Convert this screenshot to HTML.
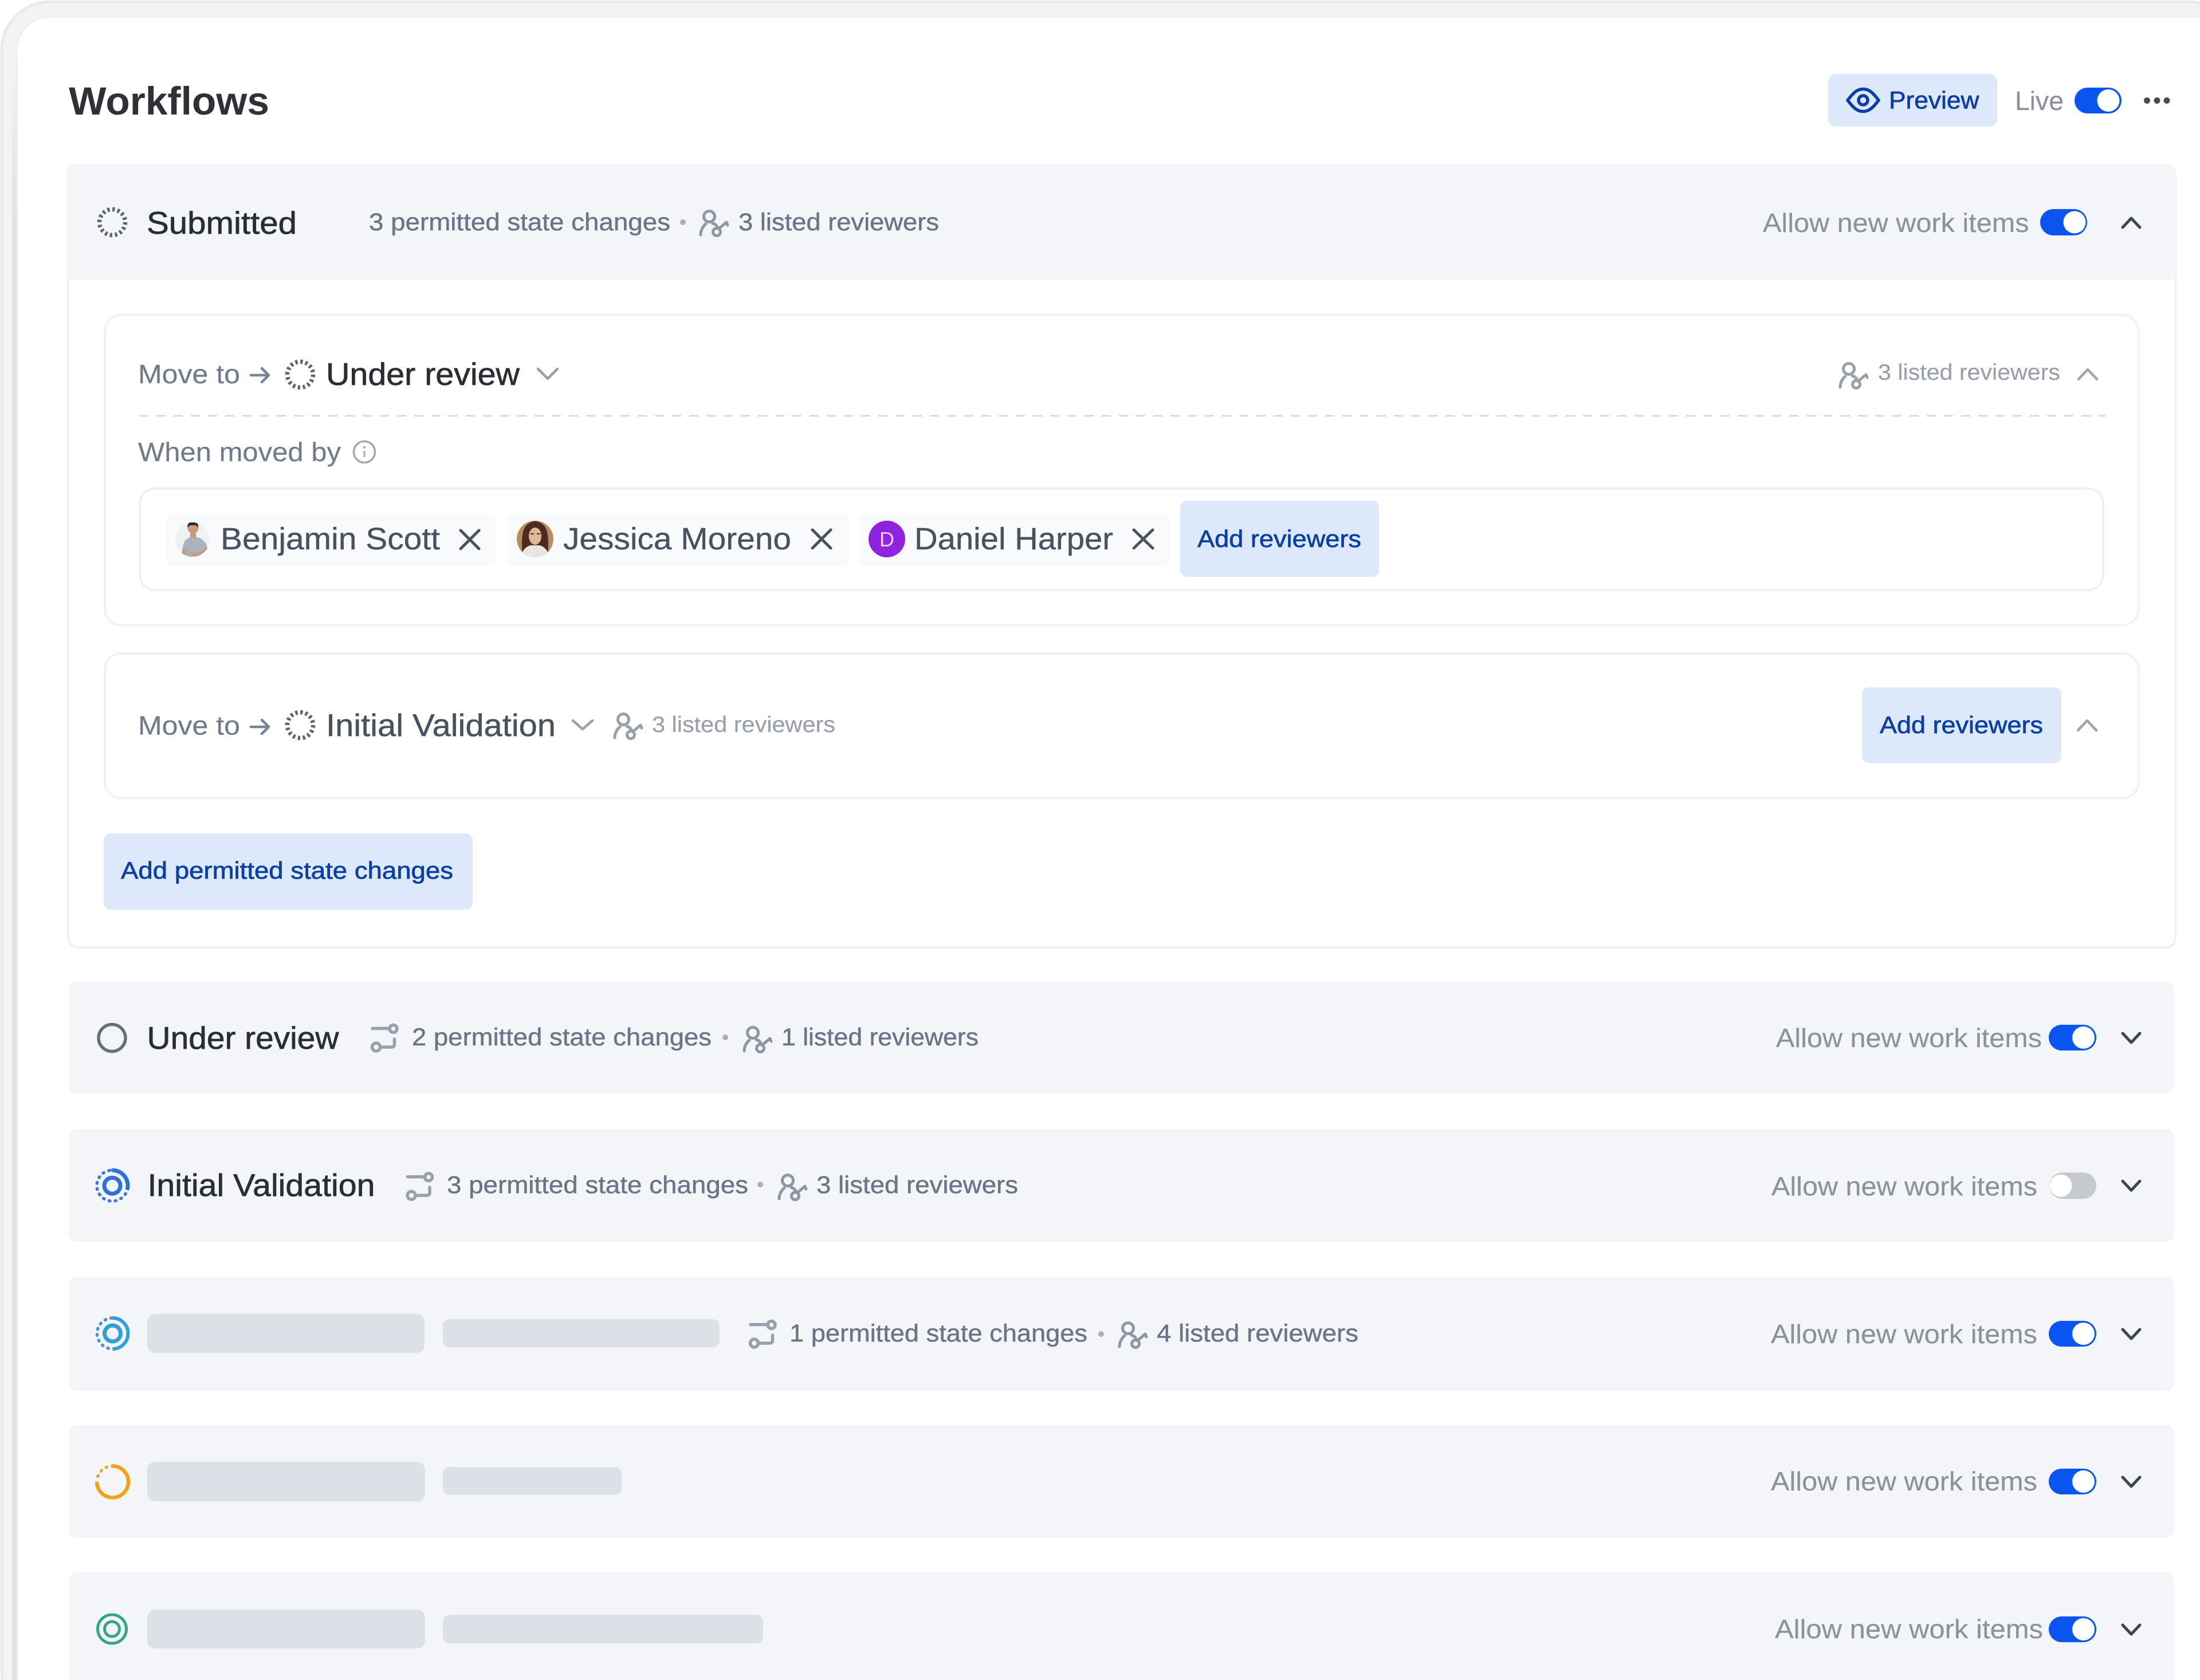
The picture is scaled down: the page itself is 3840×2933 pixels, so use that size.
<!DOCTYPE html>
<html lang="en">
<head>
<meta charset="utf-8">
<title>Workflows</title>
<style>
html,body{margin:0;padding:0;background:#fff;width:3840px;height:2933px;overflow:hidden}
svg{display:block;font-family:"Liberation Sans",Arial,sans-serif}
.meta{font-size:43px;fill:#6b7585;stroke:#6b7585;stroke-width:.5}
.allow{font-size:46.500px;fill:#8b929b;stroke:#8b929b;stroke-width:.2}
.name{font-size:55px;fill:#2a2e33;stroke:#2a2e33;stroke-width:.7}
.dark2{font-size:55px;fill:#4a5260;stroke:#4a5260;stroke-width:.5}
.mv{font-size:46.500px;fill:#727b8c;stroke:#727b8c;stroke-width:.2}
.sm{font-size:38.500px;fill:#9aa0a8;stroke:#9aa0a8;stroke-width:.2}
.btn{font-size:41.500px;fill:#0a3fa8;stroke:#0a3fa8;stroke-width:.7}
.ppl{font-size:54px;fill:#4a5260;stroke:#4a5260;stroke-width:.4}
.row{fill:#f3f5f8}
.sk{fill:#dde0e6}
.bb{fill:#dde8fa}
.ln{fill:none;stroke-linecap:round;stroke-linejoin:round}
</style>
</head>
<body>
<svg xmlns="http://www.w3.org/2000/svg" width="3840" height="2933" viewBox="0 0 3840 2933">
<defs>
<linearGradient id="lb" x1="0" x2="0" y1="0" y2="1"><stop offset="0" stop-color="#dfe1e3" stop-opacity="0"/><stop offset=".1" stop-color="#dfe1e3"/><stop offset="1" stop-color="#dfe1e3"/></linearGradient>
<symbol id="person" viewBox="0 0 51 46" width="51" height="46" overflow="visible">
<g class="ln" stroke="currentColor" stroke-width="5">
<circle cx="18" cy="13" r="9.500"/>
<path d="M3 45C3 37 7 30 12 26"/>
<path d="M24 25Q29 26 32 31"/>
<circle cx="31" cy="40" r="6.500"/>
<path d="M35 34L48 23L50 28"/>
</g>
</symbol>
<symbol id="route" viewBox="0 0 49 50" width="49" height="50" overflow="visible">
<g class="ln" stroke="#9aa0ab" stroke-width="5.500">
<path d="M2 8.500H31"/><circle cx="38.500" cy="9" r="6.500"/>
<circle cx="8.500" cy="41" r="7"/>
<path d="M16 41H35Q40.500 41 40.500 36V27"/>
</g>
</symbol>
<clipPath id="cb"><circle cx="336" cy="942" r="30"/></clipPath>
<clipPath id="cj"><circle cx="934" cy="941" r="32"/></clipPath>
</defs>

<!-- device frame -->
<rect x="3" y="3" width="3900" height="3000" rx="85" fill="#f2f3f4" stroke="#e8eaec" stroke-width="5"/>
<rect x="21" y="110" width="9" height="2823" fill="url(#lb)"/>
<rect x="30" y="30" width="3900" height="3000" rx="56" fill="#fff" stroke="#eceef0" stroke-width="2"/>

<!-- header -->
<text x="120" y="200" font-size="69" font-weight="700" fill="#2e3237" textLength="350" lengthAdjust="spacingAndGlyphs">Workflows</text>
<rect class="bb" x="3191" y="129" width="295" height="92" rx="14"/>
<g class="ln" stroke="#0a3fa8" stroke-width="5.500">
<path d="M3225 175C3236 160 3243 155.500 3252 155.500S3268 160 3279 175C3268 190 3261 194.500 3252 194.500S3236 190 3225 175Z"/>
<circle cx="3252" cy="175" r="8"/>
</g>
<text class="btn" x="3297" y="189.500" textLength="157.500" lengthAdjust="spacingAndGlyphs" style="font-size:42.500px">Preview</text>
<text class="allow" x="3517" y="192" textLength="85" lengthAdjust="spacingAndGlyphs">Live</text>
<rect x="3621" y="153" width="82" height="45" rx="22.500" fill="#0a55ef"/><circle cx="3680" cy="175.500" r="19.500" fill="#fff"/>
<circle cx="3747.500" cy="175.500" r="5.500" fill="#4a4d52"/><circle cx="3765" cy="175.500" r="5.500" fill="#4a4d52"/><circle cx="3782" cy="175.500" r="5.500" fill="#4a4d52"/>

<!-- Submitted card -->
<rect x="119" y="288" width="3678" height="1366" rx="16" fill="#fff" stroke="#f0f1f3" stroke-width="4"/>
<path class="row" d="M117 302a16 16 0 0 1 16-16H3781a16 16 0 0 1 16 16V488H117Z"/>
<circle cx="196" cy="388" r="22.500" fill="none" stroke="#5e6368" stroke-width="7.500" stroke-dasharray="4.200 4.636"/>
<text class="name" x="256" y="408" textLength="262" lengthAdjust="spacingAndGlyphs">Submitted</text>
<text class="meta" x="644" y="402" textLength="526" lengthAdjust="spacingAndGlyphs">3 permitted state changes</text>
<circle cx="1192" cy="388" r="5" fill="#a9afb8"/>
<use href="#person" x="1220" y="365" style="color:#8f96a3"/>
<text class="meta" x="1289" y="402" textLength="350" lengthAdjust="spacingAndGlyphs">3 listed reviewers</text>
<text class="allow" x="3077" y="405" textLength="464.500" lengthAdjust="spacingAndGlyphs">Allow new work items</text>
<rect x="3561" y="365" width="82" height="46" rx="23" fill="#0a55ef"/><circle cx="3621" cy="388" r="19.500" fill="#fff"/>
<path class="ln" d="M3705 397L3720 381L3735 397" stroke="#3f4650" stroke-width="5"/>

<!-- inner card 1 -->
<rect x="183" y="550" width="3550" height="541" rx="28" fill="#fff" stroke="#f1f2f4" stroke-width="4"/>
<text class="mv" x="241" y="669" textLength="178" lengthAdjust="spacingAndGlyphs">Move to</text>
<path class="ln" d="M438 655H469M457 643L469 655L457 667" stroke="#7b8296" stroke-width="4.500"/>
<circle cx="524" cy="654" r="22.500" fill="none" stroke="#5e6368" stroke-width="7.500" stroke-dasharray="4.200 4.636"/>
<text class="name" x="569" y="672" textLength="338" lengthAdjust="spacingAndGlyphs">Under review</text>
<path class="ln" d="M939 644L956 661L973 644" stroke="#9aa0a8" stroke-width="4.500"/>
<use href="#person" x="3209" y="631" style="color:#9aa0a8"/>
<text class="sm" x="3278" y="663" textLength="318" lengthAdjust="spacingAndGlyphs">3 listed reviewers</text>
<path class="ln" d="M3628 662L3644 645L3660 662" stroke="#a0a5ab" stroke-width="4.500"/>
<line x1="243" y1="726" x2="3675" y2="726" stroke="#d8dadd" stroke-width="3" stroke-dasharray="16 14"/>
<text class="mv" x="241" y="805" textLength="354" lengthAdjust="spacingAndGlyphs">When moved by</text>
<circle cx="636" cy="789" r="18.500" fill="none" stroke="#a5aab0" stroke-width="3.500"/>
<circle cx="636" cy="781" r="2.200" fill="#a5aab0"/><path d="M636 787V798" stroke="#a5aab0" stroke-width="3"/>

<rect x="244" y="853" width="3427" height="177" rx="26" fill="#fff" stroke="#eff0f2" stroke-width="4"/>

<!-- Benjamin -->
<rect x="290" y="898" width="576" height="90" rx="8" fill="#f9fafb"/>
<g clip-path="url(#cb)">
<circle cx="336" cy="942" r="30" fill="#f0f1f3"/>
<path d="M316 972L320 950Q324 938 338 937Q354 938 360 950L364 972Z" fill="#aab4c0"/>
<rect x="332" y="928" width="10" height="12" fill="#c99b7d"/>
<circle cx="337" cy="922" r="9.500" fill="#c99b7d"/>
<path d="M327 921Q327 910 338 911Q347 912 346 921L342 917H332Z" fill="#2f2a28"/>
<path d="M319 957L340 972H318ZM362 955L345 966L328 963L322 970L345 973L364 960Z" fill="#c99b7d"/>
</g>
<text class="ppl" x="385" y="959" textLength="383" lengthAdjust="spacingAndGlyphs">Benjamin Scott</text>
<path class="ln" d="M804 926L836 958M836 926L804 958" stroke="#4a5260" stroke-width="5"/>

<!-- Jessica -->
<rect x="887" y="898" width="595" height="90" rx="8" fill="#f9fafb"/>
<g clip-path="url(#cj)">
<circle cx="934" cy="941" r="32" fill="#b98b5e"/>
<path d="M912 970Q908 925 920 916Q934 904 948 916Q960 925 956 970Z" fill="#4c2c1e"/>
<ellipse cx="934" cy="936" rx="11" ry="15" fill="#e0b89a"/>
<path d="M926 932h6M937 932h6" stroke="#4c2c1e" stroke-width="2"/>
<path d="M908 975Q912 956 926 952H942Q956 956 960 975Z" fill="#e9e6e2"/>
</g>
<text class="ppl" x="983" y="959" textLength="398" lengthAdjust="spacingAndGlyphs">Jessica Moreno</text>
<path class="ln" d="M1418 925L1450 957M1450 925L1418 957" stroke="#4a5260" stroke-width="5"/>

<!-- Daniel -->
<rect x="1501" y="898" width="541" height="90" rx="8" fill="#f9fafb"/>
<circle cx="1548" cy="941" r="32" fill="#8e24e0"/>
<text x="1548" y="954" text-anchor="middle" font-size="36" fill="#ecc8fb">D</text>
<text class="ppl" x="1596" y="959" textLength="347" lengthAdjust="spacingAndGlyphs">Daniel Harper</text>
<path class="ln" d="M1979 925L2012 957M2012 925L1979 957" stroke="#4a5260" stroke-width="5"/>

<rect class="bb" x="2060" y="874" width="347" height="133" rx="12"/>
<text class="btn" x="2090" y="955" textLength="286" lengthAdjust="spacingAndGlyphs">Add reviewers</text>

<!-- inner card 2 -->
<rect x="183" y="1141" width="3550" height="252" rx="28" fill="#fff" stroke="#f1f2f4" stroke-width="4"/>
<text class="mv" x="241" y="1282.500" textLength="178" lengthAdjust="spacingAndGlyphs">Move to</text>
<path class="ln" d="M438 1269H469M457 1257L469 1269L457 1281" stroke="#7b8296" stroke-width="4.500"/>
<circle cx="524" cy="1266" r="22.500" fill="none" stroke="#5e6368" stroke-width="7.500" stroke-dasharray="4.200 4.636"/>
<text class="dark2" x="569" y="1285" textLength="401" lengthAdjust="spacingAndGlyphs">Initial Validation</text>
<path class="ln" d="M1000 1258L1017 1273L1034 1258" stroke="#9aa0a8" stroke-width="4.500"/>
<use href="#person" x="1070" y="1243" style="color:#9aa0a8"/>
<text class="sm" x="1138" y="1278" textLength="320" lengthAdjust="spacingAndGlyphs">3 listed reviewers</text>
<rect class="bb" x="3250" y="1200" width="348" height="132" rx="12"/>
<text class="btn" x="3281" y="1280" textLength="285" lengthAdjust="spacingAndGlyphs">Add reviewers</text>
<path class="ln" d="M3627 1275L3643 1258L3659 1275" stroke="#a0a5ab" stroke-width="4.500"/>

<rect class="bb" x="181" y="1455" width="644" height="133" rx="12"/>
<text class="btn" x="211" y="1534" textLength="580" lengthAdjust="spacingAndGlyphs">Add permitted state changes</text>

<!-- Under review row -->
<rect class="row" x="120" y="1714" width="3675" height="195" rx="14"/>
<circle cx="195.500" cy="1812" r="23.500" fill="none" stroke="#6b6e72" stroke-width="5.500"/>
<text class="name" x="256.500" y="1831" textLength="335" lengthAdjust="spacingAndGlyphs">Under review</text>
<use href="#route" x="648" y="1787"/>
<text class="meta" x="719" y="1825" textLength="523" lengthAdjust="spacingAndGlyphs">2 permitted state changes</text>
<circle cx="1266" cy="1811" r="5" fill="#a9afb8"/>
<use href="#person" x="1296" y="1790" style="color:#8f96a3"/>
<text class="meta" x="1364" y="1825" textLength="344" lengthAdjust="spacingAndGlyphs">1 listed reviewers</text>
<text class="allow" x="3100" y="1828" textLength="464" lengthAdjust="spacingAndGlyphs">Allow new work items</text>
<rect x="3576" y="1789" width="83" height="45" rx="22.500" fill="#0a55ef"/><circle cx="3636.500" cy="1811.500" r="19.500" fill="#fff"/>
<path class="ln" d="M3705 1804L3720 1820L3735 1804" stroke="#3f4650" stroke-width="5"/>

<!-- Initial Validation row -->
<rect class="row" x="120" y="1971" width="3675" height="197" rx="14"/>
<g transform="rotate(-90 196 2070)" fill="none">
<circle cx="196" cy="2070" r="27" stroke="#2d6fe0" stroke-width="7" stroke-dasharray="50 120"/>
<circle cx="196" cy="2070" r="27" stroke="#3c7ae3" stroke-width="5.500" stroke-linecap="round" stroke-dasharray="0 57 1.500 9.100 1.500 9.100 1.500 9.100 1.500 9.100 1.500 9.100 1.500 9.100 1.500 9.100 1.500 9.100 1.500 9.100 1.500 9.100 1.500 20"/>
</g>
<circle cx="196" cy="2070" r="14" fill="none" stroke="#2d6fe0" stroke-width="7"/>
<text class="name" x="257.500" y="2088" textLength="397" lengthAdjust="spacingAndGlyphs">Initial Validation</text>
<use href="#route" x="709.500" y="2046"/>
<text class="meta" x="780" y="2083" textLength="526" lengthAdjust="spacingAndGlyphs">3 permitted state changes</text>
<circle cx="1327" cy="2068" r="5" fill="#a9afb8"/>
<use href="#person" x="1357" y="2048" style="color:#8f96a3"/>
<text class="meta" x="1425" y="2083" textLength="352" lengthAdjust="spacingAndGlyphs">3 listed reviewers</text>
<text class="allow" x="3092" y="2087" textLength="464" lengthAdjust="spacingAndGlyphs">Allow new work items</text>
<rect x="3577" y="2047" width="82" height="46" rx="23" fill="#c6cad0"/><circle cx="3597" cy="2070" r="19.500" fill="#fff"/>
<path class="ln" d="M3705 2062L3720 2078L3735 2062" stroke="#3f4650" stroke-width="5"/>

<!-- skeleton row 4 -->
<rect class="row" x="120" y="2229" width="3675" height="199" rx="14"/>
<g transform="rotate(-90 196.500 2328)" fill="none">
<circle cx="196.500" cy="2328" r="27" stroke="#2e9fd8" stroke-width="6" stroke-dasharray="84.800 90"/>
<circle cx="196.500" cy="2328" r="27" stroke="#4a94c7" stroke-width="5.500" stroke-linecap="round" stroke-dasharray="0 92 1.500 9.100 1.500 9.100 1.500 9.100 1.500 9.100 1.500 9.100 1.500 9.100 1.500 9.100 1.500 30"/>
</g>
<circle cx="196.500" cy="2328" r="14" fill="none" stroke="#2e9fd8" stroke-width="7"/>
<rect class="sk" x="257" y="2294" width="484" height="68" rx="14"/>
<rect class="sk" x="773" y="2303" width="483" height="49" rx="12"/>
<use href="#route" x="1308" y="2304"/>
<text class="meta" x="1378" y="2342" textLength="520" lengthAdjust="spacingAndGlyphs">1 permitted state changes</text>
<circle cx="1922" cy="2329" r="5" fill="#a9afb8"/>
<use href="#person" x="1951" y="2306" style="color:#8f96a3"/>
<text class="meta" x="2019" y="2342" textLength="352" lengthAdjust="spacingAndGlyphs">4 listed reviewers</text>
<text class="allow" x="3091" y="2345" textLength="465" lengthAdjust="spacingAndGlyphs">Allow new work items</text>
<rect x="3576" y="2306" width="83" height="45" rx="22.500" fill="#0a55ef"/><circle cx="3636.500" cy="2328.500" r="19.500" fill="#fff"/>
<path class="ln" d="M3705 2321L3720 2337L3735 2321" stroke="#3f4650" stroke-width="5"/>

<!-- skeleton row 5 -->
<rect class="row" x="120" y="2488" width="3675" height="197" rx="14"/>
<g transform="rotate(-90 196.500 2587)" fill="none">
<circle cx="196.500" cy="2587" r="27.500" stroke="#efa31d" stroke-width="6.500" stroke-linecap="round" stroke-dasharray="127 60"/>
<circle cx="196.500" cy="2587" r="27.500" stroke="#e9a63a" stroke-width="5.500" stroke-linecap="round" stroke-dasharray="0 139 1.500 9.500 1.500 9.500 1.500 40"/>
</g>
<rect class="sk" x="257" y="2552" width="485" height="69" rx="14"/>
<rect class="sk" x="773" y="2561" width="312" height="49" rx="12"/>
<text class="allow" x="3091" y="2602" textLength="465" lengthAdjust="spacingAndGlyphs">Allow new work items</text>
<rect x="3576" y="2564" width="83" height="45" rx="22.500" fill="#0a55ef"/><circle cx="3636.500" cy="2586.500" r="19.500" fill="#fff"/>
<path class="ln" d="M3705 2579L3720 2595L3735 2579" stroke="#3f4650" stroke-width="5"/>

<!-- skeleton row 6 -->
<rect class="row" x="120" y="2745" width="3675" height="260" rx="14"/>
<circle cx="195.500" cy="2844" r="25" fill="none" stroke="#33a688" stroke-width="5"/>
<circle cx="195.500" cy="2844" r="13" fill="none" stroke="#33a688" stroke-width="5"/>
<rect class="sk" x="257" y="2810" width="485" height="68" rx="14"/>
<rect class="sk" x="773" y="2819" width="559" height="50" rx="12"/>
<text class="allow" x="3098" y="2860" textLength="468" lengthAdjust="spacingAndGlyphs">Allow new work items</text>
<rect x="3576" y="2822" width="83" height="45" rx="22.500" fill="#0a55ef"/><circle cx="3636.500" cy="2844.500" r="19.500" fill="#fff"/>
<path class="ln" d="M3705 2837L3720 2853L3735 2837" stroke="#3f4650" stroke-width="5"/>
</svg>
</body>
</html>
